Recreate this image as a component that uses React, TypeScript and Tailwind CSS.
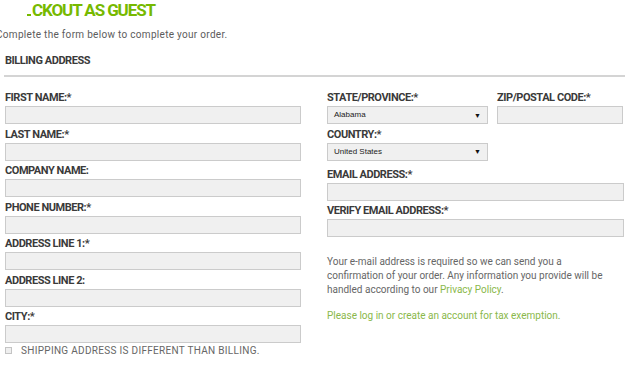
import React from 'react';

const head = "font-['Roboto','Liberation_Sans',sans-serif]";
const body = "font-['Roboto','Liberation_Sans',sans-serif]";

const Label: React.FC<{ text: string }> = ({ text }) => (
  <div className={`${head} font-bold text-[11px] leading-[12px] tracking-[-0.45px] text-[#3a3a3a]`}>{text}</div>
);

const Input: React.FC<{ className?: string }> = ({ className = '' }) => (
  <div className={`mt-[2px] h-[18px] bg-[#f0f0f0] border border-[#cbcbcb] ${className}`}></div>
);

const Select: React.FC<{ value: string }> = ({ value }) => (
  <div className="mt-[2px] h-[18px] w-[161px] bg-[#f0f0f0] border border-[#cbcbcb] flex items-center justify-between pl-[6px] pr-[6px]">
    <span className="font-['Liberation_Sans',Arial,sans-serif] text-[8px] text-[#222]">{value}</span>
    <span className="text-[7px] text-[#111] leading-none">▼</span>
  </div>
);

const Field: React.FC<{ label: string }> = ({ label }) => (
  <div className="mb-[4.5px]">
    <Label text={label} />
    <Input />
  </div>
);

export default function App() {
  return (
    <div className="w-[630px] h-[367px] overflow-hidden bg-white relative">
      {/* Heading */}
      <div className={`${head} font-bold text-[17px] leading-[19px] tracking-[-1.1px] text-[#76b900] pl-[27px] pt-[1px] flex items-end`}>
        <span className="inline-block w-[4px] h-[2px] bg-[#76b900] mb-[4px] mr-[1px]"></span>
        <span>CKOUT AS GUEST</span>
      </div>
      <p className={`${body} text-[10px] leading-[12px] tracking-[0.3px] text-[#5c5c5c] ml-[-4px] mt-[9px]`}>
        Complete the form below to complete your order.
      </p>
      <div className="px-[5px]">
        <div className={`${head} font-bold text-[11px] leading-[12px] tracking-[-0.45px] text-[#3a3a3a] mt-[14px]`}>BILLING ADDRESS</div>
        <div className="h-[2px] bg-[#d4d4d4] mt-[8px] w-[621px] -ml-[1px]"></div>

        <div className="flex mt-[15px]">
          {/* Left column */}
          <div className="w-[296px]">
            <Field label="FIRST NAME:*" />
            <Field label="LAST NAME:*" />
            <Field label="COMPANY NAME:" />
            <Field label="PHONE NUMBER:*" />
            <Field label="ADDRESS LINE 1:*" />
            <Field label="ADDRESS LINE 2:" />
            <Field label="CITY:*" />
            <div className="flex items-center gap-[9px] -mt-[3px]">
              <span className="w-[7px] h-[7px] border border-[#c4c4c4] bg-[#efefef]"></span>
              <span className={`${body} text-[10px] leading-[12px] text-[#666] tracking-[0.3px]`}>
                SHIPPING ADDRESS IS DIFFERENT THAN BILLING.
              </span>
            </div>
          </div>

          {/* Right column */}
          <div className="ml-[26px] w-[297px]">
            <div className="flex">
              <div className="mb-[4.5px]">
                <Label text="STATE/PROVINCE:*" />
                <Select value="Alabama" />
              </div>
              <div className="ml-[9px] w-[126px]">
                <Label text="ZIP/POSTAL CODE:*" />
                <Input />
              </div>
            </div>
            <div className="mb-[8px]">
              <Label text="COUNTRY:*" />
              <Select value="United States" />
            </div>
            <Field label="EMAIL ADDRESS:*" />
            <Field label="VERIFY EMAIL ADDRESS:*" />
            <p className={`${body} text-[10px] leading-[14px] text-[#666] mt-[18px] w-[285px]`}>
              Your e-mail address is required so we can send you a confirmation of your order. Any information you provide will be handled according to our{' '}
              <a className="text-[#8ab84a]">Privacy Policy</a>.
            </p>
            <p className={`${body} text-[10px] leading-[14px] text-[#8ab84a] mt-[12px]`}>
              Please log in or create an account for tax exemption.
            </p>
          </div>
        </div>
      </div>
    </div>
  );
}
